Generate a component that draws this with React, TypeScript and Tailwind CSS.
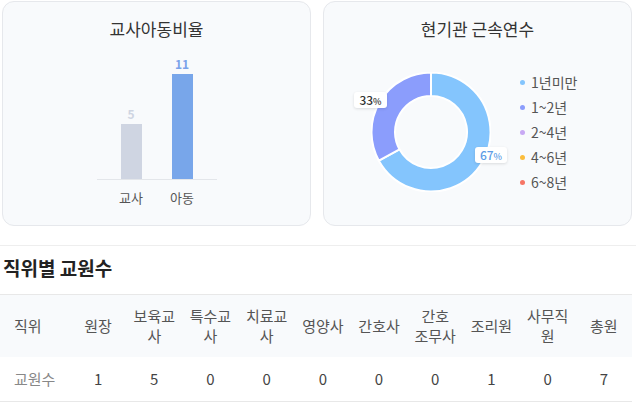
import React from 'react';

const FONT = { fontFamily: '"Noto Sans CJK KR", "Noto Sans", sans-serif' };

const bars = [
    { label: '교사', value: 5, height: 55, bar: 'bg-[#cfd5e2]', text: 'text-[#cfd5e2]' },
    { label: '아동', value: 11, height: 105, bar: 'bg-[#78a6ea]', text: 'text-[#7aa3ea]' },
];

const legend = [
    { label: '1년미만', dot: 'bg-[#84c5fd]' },
    { label: '1~2년', dot: 'bg-[#8b9dfc]' },
    { label: '2~4년', dot: 'bg-[#c8a9f4]' },
    { label: '4~6년', dot: 'bg-[#fbbd3c]' },
    { label: '6~8년', dot: 'bg-[#f67565]' },
];

// second item of a pair goes on its own line
const columns: [string, string?][] = [
    ['원장'], ['보육교사'], ['특수교사'], ['치료교사'], ['영양사'], ['간호사'],
    ['간호', '조무사'], ['조리원'], ['사무직원'], ['총원'],
];
const counts = [1, 5, 0, 0, 0, 0, 0, 1, 0, 7];

// annulus slice, angles in degrees clockwise from 12 o'clock
const slice = (cx: number, cy: number, r: number, r0: number, a1: number, a2: number) => {
    const pt = (rad: number, a: number) => {
        const t = ((a - 90) * Math.PI) / 180;
        return `${(cx + rad * Math.cos(t)).toFixed(2)} ${(cy + rad * Math.sin(t)).toFixed(2)}`;
    };
    const large = a2 - a1 > 180 ? 1 : 0;
    return `M ${pt(r, a1)} A ${r} ${r} 0 ${large} 1 ${pt(r, a2)} L ${pt(r0, a2)} A ${r0} ${r0} 0 ${large} 0 ${pt(r0, a1)} Z`;
};

const Card: React.FC<{ title: string; children: React.ReactNode }> = ({ title, children }) => (
    <div className="h-[225px] rounded-[12px] border border-[#e6e8ec] bg-[#f8fafc] pt-[15px]">
        <h2 className="text-center text-[17px] leading-[24px] text-[#333]">{title}</h2>
        {children}
    </div>
);

const App: React.FC = () => {
    const split = 360 * 0.67;

    return (
        <div className="w-[636px] bg-white" style={FONT}>
            <div className="grid w-[632px] grid-cols-2 gap-[12px] pl-[2px] pt-[1px]">
                <Card title="교사아동비율">
                    <div className="mx-auto mt-[16px] w-[120px]">
                        <div className="flex items-end justify-center gap-[30px] border-b border-[#e3e6ea]">
                            {bars.map(b => (
                                <div key={b.label} className="flex w-[21px] flex-col items-center">
                                    <span className={`mb-[3px] text-[12px] font-bold leading-[14px] ${b.text}`}>{b.value}</span>
                                    <div className={`w-[21px] ${b.bar}`} style={{ height: b.height }} />
                                </div>
                            ))}
                        </div>
                        <div className="mt-[9px] flex justify-center gap-[30px]">
                            {bars.map(b => (
                                <div key={b.label} className="flex w-[21px] justify-center whitespace-nowrap text-[13px] leading-[18px] text-[#555]">
                                    {b.label}
                                </div>
                            ))}
                        </div>
                    </div>
                </Card>

                <Card title="현기관 근속연수">
                    <div className="mt-[29px] flex items-start pl-[47px]">
                        <div className="relative mt-[2px] h-[120px] w-[120px]">
                            <svg width="120" height="120" viewBox="0 0 120 120">
                                <path d={slice(60, 60, 59.5, 36, 0, split)} fill="#84c5fd" stroke="#ffffff" strokeWidth="2" />
                                <path d={slice(60, 60, 59.5, 36, split, 360)} fill="#8b9dfc" stroke="#ffffff" strokeWidth="2" />
                            </svg>
                            <div className="absolute left-[-17px] top-[20px] flex h-[16px] w-[33px] items-baseline justify-center rounded-[3px] bg-white shadow-[0_1px_3px_rgba(0,0,0,0.12)]">
                                <span className="text-[12px] font-medium leading-[16px] text-[#333]">33</span>
                                <span className="text-[9px] font-medium text-[#333]">%</span>
                            </div>
                            <div className="absolute left-[104px] top-[75px] flex h-[16px] w-[32px] items-baseline justify-center rounded-[3px] bg-white shadow-[0_1px_3px_rgba(0,0,0,0.12)]">
                                <span className="text-[12px] font-medium leading-[16px] text-[#5d9de6]">67</span>
                                <span className="text-[9px] font-medium text-[#5d9de6]">%</span>
                            </div>
                        </div>
                        <ul className="ml-[29px] flex flex-col">
                            {legend.map(l => (
                                <li key={l.label} className="flex h-[25px] items-center gap-[6px] text-[14px] text-[#555]">
                                    <span className={`h-[5px] w-[5px] rounded-full ${l.dot}`} />
                                    {l.label}
                                </li>
                            ))}
                        </ul>
                    </div>
                </Card>
            </div>

            <div className="mt-[19px] border-t border-[#eeeeee] pt-[9px]">
                <h3 className="pl-[3px] text-[19px] font-bold leading-[26px] text-[#222]">직위별 교원수</h3>
                <table className="mt-[13px] w-[632px] table-fixed border-collapse text-[15px]">
                    <colgroup>
                        <col className="w-[70px]" />
                        {columns.map(c => <col key={c[0]} />)}
                    </colgroup>
                    <thead>
                        <tr className="border-t border-[#e8e8e8] bg-[#f8fafc]">
                            <th className="py-[11px] pl-[14px] text-left font-normal leading-[20px] text-[#555]">직위</th>
                            {columns.map(([a, b]) => (
                                <th key={a} className="px-[4px] py-[11px] text-center font-normal leading-[20px] text-[#555]">
                                    {a}
                                    {b && <><br />{b}</>}
                                </th>
                            ))}
                        </tr>
                    </thead>
                    <tbody>
                        <tr className="border-b border-[#e8e8e8]">
                            <td className="h-[44px] pl-[14px] text-left text-[#888]">교원수</td>
                            {counts.map((n, i) => (
                                <td key={i} className="h-[44px] text-center text-[#444]">{n}</td>
                            ))}
                        </tr>
                    </tbody>
                </table>
            </div>
        </div>
    );
};

export default App;
